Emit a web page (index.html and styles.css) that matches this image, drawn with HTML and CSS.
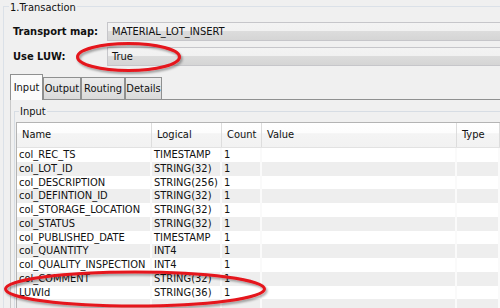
FILE: index.html
```html
<!DOCTYPE html>
<html lang="en">
  <head>
    <meta charset="UTF-8" />
    <meta name="viewport" content="width=device-width, initial-scale=1.0" />
    <title>Transaction</title>
    <link rel="stylesheet" href="styles.css">
  </head>

  <body>
    <div class="group">
      <div class="group-title">1.Transaction</div>

      <div class="field-row">
        <span class="field-label">Transport map:</span>
        <div class="field">MATERIAL_LOT_INSERT</div>
      </div>
      <div class="field-row gap">
        <span class="field-label">Use LUW:</span>
        <div class="field">True</div>
      </div>

      <div class="tabs">
        <div class="tab active tab-input">Input</div>
        <div class="tab tab-output">Output</div>
        <div class="tab tab-routing">Routing</div>
        <div class="tab tab-details">Details</div>
      </div>

      <div class="tab-panel">
        <div class="inner-group">
          <div class="group-title small">Input</div>

          <div class="grid">
            <div class="row head">
              <div class="cell">Name</div>
              <div class="cell">Logical</div>
              <div class="cell">Count</div>
              <div class="cell">Value</div>
              <div class="cell">Type</div>
            </div>
            <div class="row">
              <div class="cell">col_REC_TS</div><div class="cell">TIMESTAMP</div><div class="cell">1</div><div class="cell"></div><div class="cell"></div>
            </div>
            <div class="row">
              <div class="cell">col_LOT_ID</div><div class="cell">STRING(32)</div><div class="cell">1</div><div class="cell"></div><div class="cell"></div>
            </div>
            <div class="row">
              <div class="cell">col_DESCRIPTION</div><div class="cell">STRING(256)</div><div class="cell">1</div><div class="cell"></div><div class="cell"></div>
            </div>
            <div class="row">
              <div class="cell">col_DEFINTION_ID</div><div class="cell">STRING(32)</div><div class="cell">1</div><div class="cell"></div><div class="cell"></div>
            </div>
            <div class="row">
              <div class="cell">col_STORAGE_LOCATION</div><div class="cell">STRING(32)</div><div class="cell">1</div><div class="cell"></div><div class="cell"></div>
            </div>
            <div class="row">
              <div class="cell">col_STATUS</div><div class="cell">STRING(32)</div><div class="cell">1</div><div class="cell"></div><div class="cell"></div>
            </div>
            <div class="row">
              <div class="cell">col_PUBLISHED_DATE</div><div class="cell">TIMESTAMP</div><div class="cell">1</div><div class="cell"></div><div class="cell"></div>
            </div>
            <div class="row">
              <div class="cell">col_QUANTITY</div><div class="cell">INT4</div><div class="cell">1</div><div class="cell"></div><div class="cell"></div>
            </div>
            <div class="row">
              <div class="cell">col_QUALITY_INSPECTION</div><div class="cell">INT4</div><div class="cell">1</div><div class="cell"></div><div class="cell"></div>
            </div>
            <div class="row">
              <div class="cell">col_COMMENT</div><div class="cell">STRING(32)</div><div class="cell">1</div><div class="cell"></div><div class="cell"></div>
            </div>
            <div class="row">
              <div class="cell">LUWId</div><div class="cell">STRING(36)</div><div class="cell">1</div><div class="cell"></div><div class="cell"></div>
            </div>
            <div class="row">
              <div class="cell"></div><div class="cell"></div><div class="cell"></div><div class="cell"></div><div class="cell"></div>
            </div>
          </div>
        </div>
      </div>
    </div>

    <!-- red marker rings drawn over the screenshot -->
    <svg class="marks" width="500" height="308" viewBox="0 0 500 308">
      <defs>
        <filter id="shade" x="-10%" y="-30%" width="120%" height="160%">
          <feDropShadow dx="1.5" dy="2" stdDeviation="1.2" flood-color="#000" flood-opacity="0.35" />
        </filter>
      </defs>
      <ellipse cx="128.5" cy="57" rx="51" ry="13.5" fill="none" stroke="#e5141c" stroke-width="3" filter="url(#shade)" />
      <ellipse cx="135" cy="289" rx="129.5" ry="17" fill="none" stroke="#e5141c" stroke-width="3" filter="url(#shade)" />
    </svg>
  </body>
</html>
```

FILE: styles.css
```css
body {
  margin: 0;
  width: 500px;
  height: 308px;
  overflow: hidden;
  position: relative;
  background-color: #f0f0f0;
  color: #111;
  font-family: "DejaVu Sans Condensed", "DejaVu Sans", sans-serif;
  font-stretch: condensed;
  font-size: 11px;
}

/* Titled borders */
.group {
  box-sizing: border-box;
  height: 302px;
  margin: 6px 0 0 3px;
  border-top: 1px solid #dbe1e8;
  border-left: 1px solid #dbe1e8;
}

.group-title {
  width: fit-content;
  margin: -6px 0 0 5px;
  padding: 0 1px;
  line-height: 13px;
  background-color: #f0f0f0;
}

.group-title.small {
  margin: -7px 0 0 4px;
}

/* Combo fields */
.field-row {
  display: flex;
  align-items: center;
  margin-top: 8px;
}

.field-row.gap {
  margin-top: 6px;
}

.field-label {
  width: 94px;
  padding-left: 9px;
  font-weight: bold;
}

.field {
  flex: 1;
  height: 17px;
  line-height: 17px;
  padding-left: 4px;
  border: 1px solid #c6c6ca;
  border-right: none;
  background: linear-gradient(#f3f3f3 0, #f1f1f1 45%, #dcdcdc 50%, #d5d5d5 100%);
}

/* Tabs */
.tabs {
  display: flex;
  align-items: flex-end;
  margin: 8px 0 0 6px;
  height: 25px;
}

.tab {
  box-sizing: border-box;
  height: 22px;
  line-height: 22px;
  text-align: center;
  border: 1px solid #8f9090;
  border-bottom: none;
  background: linear-gradient(#ececec, #dadada);
}

.tab.active {
  height: 26px;
  margin-bottom: -1px;
  line-height: 26px;
  position: relative;
  background: #fbfbfb;
}

.tab-input { width: 33px; }
.tab-output { width: 38px; }
.tab-routing { width: 44px; }
.tab-details { width: 37px; }

.tab-panel {
  box-sizing: border-box;
  height: 210px;
  overflow: hidden;
  margin-left: 6px;
  border-top: 1px solid #8f9090;
  border-left: 1px solid #c9c9c9;
  padding: 11px 0 0 3px;
}

.inner-group {
  border-top: 1px solid #d7dde4;
  border-left: 1px solid #d7dde4;
}

/* Table */
.grid {
  margin: 4px 0 0 1px;
  border-top: 1px solid #b4b4b4;
  border-left: 1px solid #b4b4b4;
  background-color: #fff;
}

.row {
  display: grid;
  grid-template-columns: 135px 70px 40px 195px 1fr;
  height: 13.75px;
  line-height: 13.75px;
}

.row:nth-child(odd) {
  background-color: #eeeeee;
}

.cell {
  padding-left: 2px;
  white-space: nowrap;
  overflow: hidden;
  border-right: 2px solid #fafafa;
}

.row.head {
  height: 24px;
  line-height: 24px;
  border-bottom: 1px solid #e2e2e2;
  background: linear-gradient(#ffffff 0, #fdfdfd 40%, #f4f4f4 45%, #f2f2f2 100%);
}

.row.head .cell {
  padding-left: 5px;
  border-right: 1px solid #dddddd;
}

.marks {
  position: absolute;
  top: 0;
  left: 0;
  pointer-events: none;
}
```
